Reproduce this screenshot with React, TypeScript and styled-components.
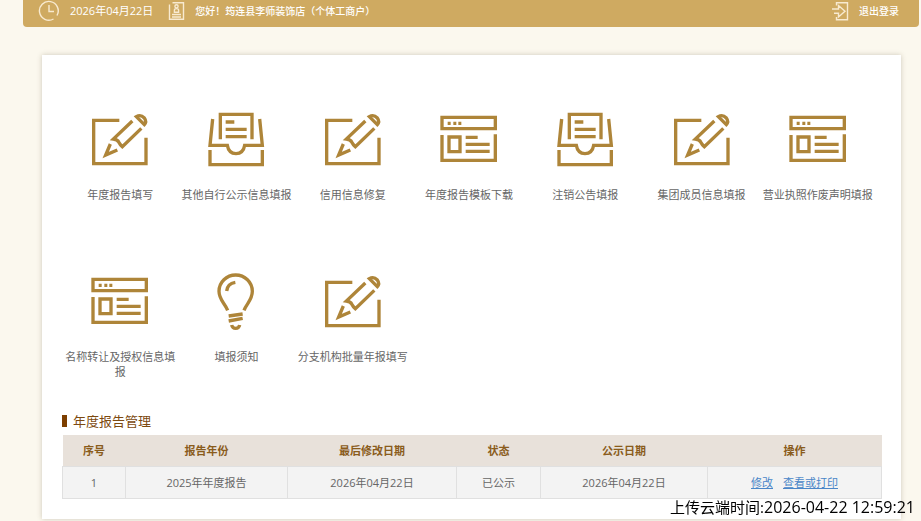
import React from "react";
import styled, { createGlobalStyle } from "styled-components";

const GlobalStyle = createGlobalStyle`
  * { box-sizing: border-box; }
  body {
    margin: 0;
    background: #fbf8ee;
    font-family: "Open Sans", "Noto Sans CJK SC", sans-serif;
    font-size: 11px;
    color: #666;
  }
`;

const Page = styled.div`
  padding: 0 2px 2px 23px;
`;

const TopBar = styled.header`
  display: flex;
  align-items: center;
  gap: 15px;
  height: 27px;
  padding: 0 20px 5px 15px;
  background: #cfaa61;
  border-radius: 0 0 4px 4px;
  color: #fff;
`;

const BarItem = styled.div<{ $small?: boolean }>`
  display: flex;
  align-items: center;
  gap: 10px;
  font-size: ${(p) => (p.$small ? 10 : 11)}px;
  font-weight: ${(p) => (p.$small ? 500 : 400)};
  line-height: 16px;
  white-space: nowrap;
`;

const Logout = styled.a`
  display: flex;
  align-items: center;
  gap: 10px;
  margin-left: auto;
  color: #fff;
  font-size: 10px;
  line-height: 16px;
  font-weight: 500;
  text-decoration: none;
`;

const BarIcon = styled.svg`
  flex: none;
  fill: none;
  stroke: #f8ead0;
  stroke-width: 1.4;
`;

const Card = styled.main`
  margin: 28px 18px 0 19px;
  padding: 50px 20px 20px;
  background: #fff;
  box-shadow: 0 0 5px rgba(90, 80, 50, 0.28);
`;

const Tiles = styled.nav`
  display: grid;
  grid-template-columns: repeat(7, 1fr);
  row-gap: 50px;
  padding-right: 5px;
`;

const Tile = styled.a`
  display: flex;
  flex-direction: column;
  align-items: center;
  gap: 12px;
  min-height: 112px;
  color: #666;
  line-height: 15px;
  text-align: center;
  text-decoration: none;
`;

const TileIcon = styled.svg`
  width: 70px;
  height: 70px;
  fill: none;
  stroke: #ae8539;
  stroke-width: 10;
`;

const SectionTitle = styled.h2`
  display: flex;
  align-items: center;
  gap: 6px;
  margin: 32px 0 4px;
  color: #7d4a10;
  font-size: 13px;
  font-weight: 400;
  line-height: 20px;

  &::before {
    content: "";
    width: 5px;
    height: 12px;
    background: #7d3f00;
  }
`;

const Table = styled.table`
  width: 100%;
  table-layout: fixed;
  border-collapse: collapse;
  text-align: center;
`;

const Col = styled.col<{ $width: number }>`
  width: ${(p) => p.$width}px;
`;

const Th = styled.th`
  height: 31px;
  padding: 0;
  background: #e8e1da;
  color: #8a5c1c;
  font-weight: 700;
`;

const Td = styled.td`
  height: 32px;
  padding: 0;
  background: #f3f3f3;
  border: 1px solid #e0e0e0;
`;

const Action = styled.a`
  color: #4a86c8;
  text-decoration: underline;

  & + & {
    margin-left: 10px;
  }
`;

const Stamp = styled.div`
  position: fixed;
  right: 6px;
  bottom: 4px;
  color: #000;
  font-size: 15px;
  line-height: 20px;
  white-space: nowrap;
`;

const StampTime = styled.time`
  font-size: 16px;
`;

const PencilIcon = () => (
  <TileIcon viewBox="0 0 210 210" aria-hidden="true">
    <path d="M103 46H26V176H183V98" />
    <path d="M142 48L85 102Q98 104 101 111Q105 119 112 125L169 70" />
    <path d="M76 117L62 150L97 135" />
    <path d="M154 35L178 59Q186 50 178 39Q167 27 154 35Z" />
  </TileIcon>
);

const InboxIcon = () => (
  <TileIcon viewBox="4 0 210 210" aria-hidden="true">
    <path d="M39 42L31 121H83Q87 146 109 146Q131 146 135 121H188L180 42" />
    <path d="M62 103V28H157V103M78 51H104M78 73H141M78 95H141M31 135V179H188V135" />
  </TileIcon>
);

const WindowIcon = () => (
  <TileIcon viewBox="-2 0 210 210" aria-hidden="true">
    <path d="M22 37H182V71H22ZM22 90V166H182V88M43 96H76V140H43ZM93 97H129M93 118H165M93 139H165" />
    <path d="M39 55H48M56 55H65M71 55H80" />
  </TileIcon>
);

const BulbIcon = () => (
  <TileIcon viewBox="-11 6 210 210" aria-hidden="true">
    <path d="M69 136C61 115 43 105 43 79A50 49 0 0 1 143 79C143 105 126 115 118 136" />
    <path d="M66 78Q68 56 92 52M72 153L114 147M72 168L114 160M81 180Q83 190 93 190Q103 190 105 180" />
  </TileIcon>
);

const tiles = [
  { label: "年度报告填写", Icon: PencilIcon },
  { label: "其他自行公示信息填报", Icon: InboxIcon },
  { label: "信用信息修复", Icon: PencilIcon },
  { label: "年度报告模板下载", Icon: WindowIcon },
  { label: "注销公告填报", Icon: InboxIcon },
  { label: "集团成员信息填报", Icon: PencilIcon },
  { label: "营业执照作废声明填报", Icon: WindowIcon },
  { label: "名称转让及授权信息填报", Icon: WindowIcon },
  { label: "填报须知", Icon: BulbIcon },
  { label: "分支机构批量年报填写", Icon: PencilIcon },
];

const columns = [
  { title: "序号", width: 63 },
  { title: "报告年份", width: 162 },
  { title: "最后修改日期", width: 169 },
  { title: "状态", width: 84 },
  { title: "公示日期", width: 167 },
  { title: "操作", width: 174 },
];

const reports = [
  { year: "2025年年度报告", modified: "2026年04月22日", status: "已公示", published: "2026年04月22日" },
];

export default function App() {
  return (
    <>
      <GlobalStyle />
      <Page>
        <TopBar>
          <BarItem>
            <BarIcon width="22" height="22" viewBox="0 0 22 22" aria-hidden="true">
              <path d="M15.5 19A9.4 9.4 0 1 1 19 15.5M11 5V11.5H16" />
            </BarIcon>
            <time dateTime="2026-04-22">2026年04月22日</time>
          </BarItem>
          <BarItem $small>
            <BarIcon width="17" height="20" viewBox="0 0 17 20" aria-hidden="true">
              <path d="M4.5 1.7H15.5V18.3H1.5V3.5M4 13.5H13M4 16H13" />
              <circle cx="8.5" cy="5.3" r="1.6" />
              <path d="M6.4 11.3V9.3Q6.4 7.6 8.5 7.6Q10.6 7.6 10.6 9.3V11.3Z" />
            </BarIcon>
            <span>您好！筠连县李师装饰店（个体工商户）</span>
          </BarItem>
          <Logout href="#logout">
            <BarIcon width="18" height="20" viewBox="0 0 18 20" aria-hidden="true">
              <path d="M5.5 4.5V1.7H16.5V18.8H5.5V16M1 8H7.5V4.5L14 10.2L7.5 16V12.3H3" />
            </BarIcon>
            退出登录
          </Logout>
        </TopBar>

        <Card>
          <Tiles>
            {tiles.map(({ label, Icon }) => (
              <Tile href="#" key={label}>
                <Icon />
                <span>{label}</span>
              </Tile>
            ))}
          </Tiles>

          <SectionTitle>年度报告管理</SectionTitle>
          <Table>
            <colgroup>
              {columns.map((c) => (
                <Col key={c.title} $width={c.width} />
              ))}
            </colgroup>
            <thead>
              <tr>
                {columns.map((c) => (
                  <Th key={c.title} scope="col">{c.title}</Th>
                ))}
              </tr>
            </thead>
            <tbody>
              {reports.map((r, i) => (
                <tr key={r.year}>
                  <Td>{i + 1}</Td>
                  <Td>{r.year}</Td>
                  <Td>{r.modified}</Td>
                  <Td>{r.status}</Td>
                  <Td>{r.published}</Td>
                  <Td>
                    <Action href="#edit">修改</Action>
                    <Action href="#print">查看或打印</Action>
                  </Td>
                </tr>
              ))}
            </tbody>
          </Table>
        </Card>
      </Page>
      <Stamp>
        上传云端时间:<StampTime dateTime="2026-04-22T12:59:21">2026-04-22 12:59:21</StampTime>
      </Stamp>
    </>
  );
}
